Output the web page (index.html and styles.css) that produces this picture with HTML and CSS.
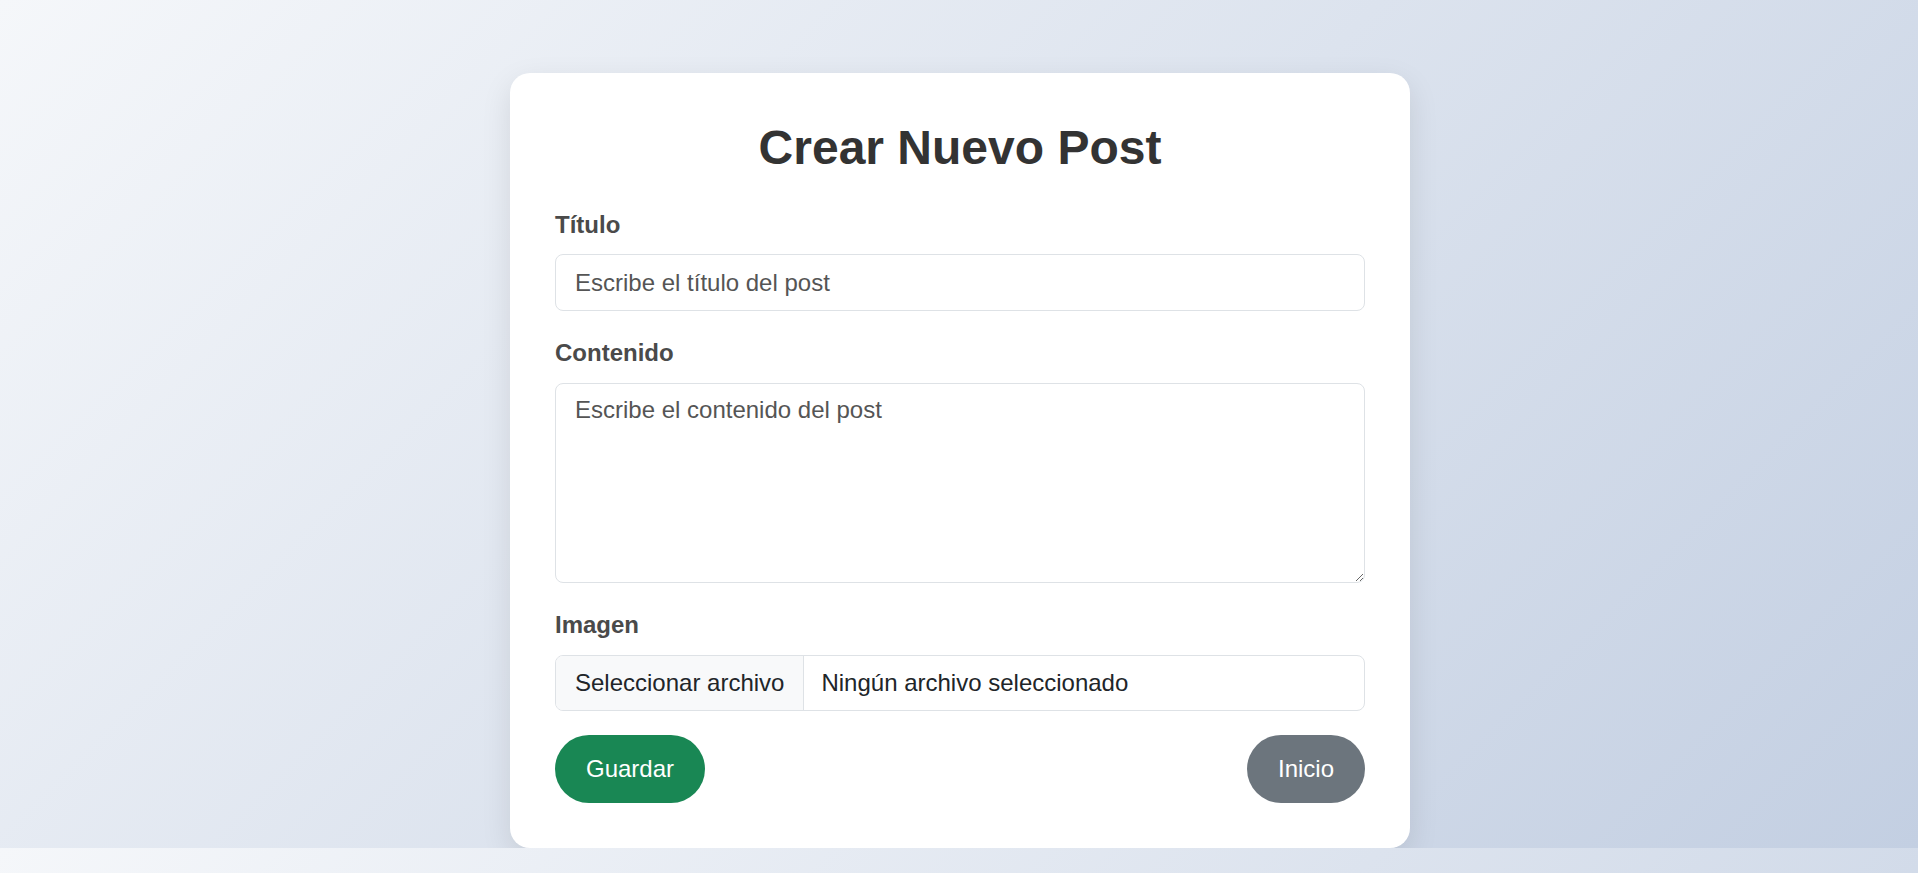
FILE: index.html
```html
<!DOCTYPE html>
<html lang="es">
<head>
<meta charset="utf-8">
<title>Crear Nuevo Post</title>
<link rel="stylesheet" href="styles.css">
</head>
<body>
  <main class="card">
    <h1 class="card-title">Crear Nuevo Post</h1>
    <form class="post-form">
      <div class="field">
        <label class="field-label" for="titulo">Título</label>
        <input class="control" id="titulo" type="text" placeholder="Escribe el título del post">
      </div>
      <div class="field">
        <label class="field-label" for="contenido">Contenido</label>
        <textarea class="control control-area" id="contenido" placeholder="Escribe el contenido del post"></textarea>
      </div>
      <div class="field field-last">
        <span class="field-label">Imagen</span>
        <label class="file-control">
          <span class="file-button">Seleccionar archivo</span>
          <span class="file-name">Ningún archivo seleccionado</span>
        </label>
      </div>
      <div class="actions">
        <button type="button" class="btn btn-success">Guardar</button>
        <button type="button" class="btn btn-secondary">Inicio</button>
      </div>
    </form>
  </main>
</body>
</html>
```
FILE: styles.css
```css
* {
  box-sizing: border-box;
}

body {
  margin: 0;
  padding: 73px 0 0 2px;
  font-family: "Liberation Sans", Arial, sans-serif;
  background: linear-gradient(135deg, #f5f7fa 0%, #c3cfe2 100%);
  color: #333;
}

.card {
  width: 900px;
  margin: 0 auto;
  background: #fff;
  border-radius: 20px;
  padding: 46px 45px 45px;
  box-shadow: 0 10px 30px rgba(0, 0, 0, 0.1);
}

.card-title {
  margin: 0 0 34px;
  font-size: 48px;
  line-height: 1.2;
  font-weight: 700;
  text-align: center;
  color: #333;
}

.post-form {
  display: flex;
  flex-direction: column;
}

.field {
  display: flex;
  flex-direction: column;
  margin-bottom: 28px;
}

.field-last {
  margin-bottom: 24px;
}

.field-label {
  display: block;
  font-size: 24px;
  line-height: 28.8px;
  font-weight: 700;
  color: #4a4a4a;
  margin-bottom: 15px;
}

.control {
  display: block;
  width: 100%;
  height: 57px;
  padding: 0 19px;
  font-family: "Liberation Sans", Arial, sans-serif;
  font-size: 24px;
  color: #333;
  background: #fff;
  border: 1px solid #dee2e6;
  border-radius: 8px;
  outline: none;
}

.control::placeholder {
  color: #555;
  opacity: 1;
}

.control-area {
  height: 200px;
  padding: 12px 19px;
  line-height: 1.2;
  resize: vertical;
}

.file-control {
  display: flex;
  height: 56px;
  border: 1px solid #dee2e6;
  border-radius: 8px;
  overflow: hidden;
  font-size: 24px;
  color: #212529;
}

.file-button {
  display: flex;
  align-items: center;
  padding: 0 19px;
  background: #f8f9fa;
  border-right: 1px solid #dee2e6;
}

.file-name {
  display: flex;
  align-items: center;
  padding: 0 17px;
  background: #fff;
}

.actions {
  display: flex;
  justify-content: space-between;
  align-items: center;
}

.btn {
  height: 68px;
  padding: 0 31px;
  border: none;
  border-radius: 34px;
  font-family: "Liberation Sans", Arial, sans-serif;
  font-size: 24px;
  color: #fff;
  cursor: pointer;
}

.btn-success {
  background: #198754;
}

.btn-secondary {
  background: #6c757d;
}
```
